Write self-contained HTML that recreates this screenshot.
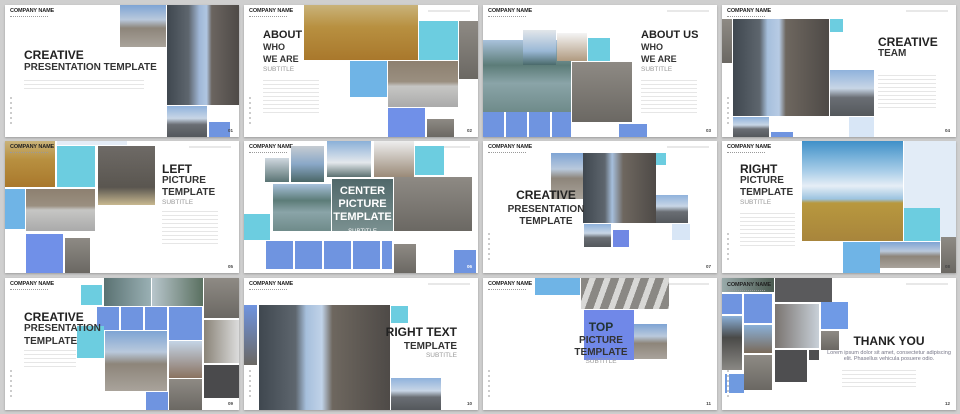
<!DOCTYPE html>
<html><head><meta charset="utf-8"><style>
*{margin:0;padding:0;box-sizing:border-box}
body{width:960px;height:414px;background:#cfcfcf;position:relative;overflow:hidden;font-family:"Liberation Sans",sans-serif}
.s{position:absolute;width:234px;height:132px;background:#fff;overflow:hidden;box-shadow:0 1px 2px rgba(0,0,0,.25)}
.s div{position:absolute}
.cn{left:5px;top:3px;font-size:5.5px;font-weight:bold;color:#222;letter-spacing:-.1px}
.cn:after{content:"";position:absolute;left:0;top:8px;width:38px;height:1px;border-top:1px dotted #999}
.hr{right:8px;top:5px;width:42px;height:2px;background:#e8e8e8}
.pn{right:6px;bottom:4px;font-size:4.5px;color:#444;font-weight:bold}
.vt{left:5px;bottom:10px;width:2px;height:30px;background:repeating-linear-gradient(#ccc 0 2px,#fff 2px 5px)}
.t1{font-size:12px;font-weight:bold;color:#222;white-space:nowrap}
.t2{font-size:10px;font-weight:bold;color:#333;white-space:nowrap}
.st{font-size:6.5px;color:#999;white-space:nowrap}
.lo{height:35px;background:repeating-linear-gradient(#e6e6e6 0 1px,#fff 1px 4px)}
.bld{background:linear-gradient(90deg,#3f474f 0,#5e666e 30%,#9fb7d6 45%,#b0c6e2 55%,#6b6560 62%,#4e4a47 100%)}
.bld2{background:linear-gradient(180deg,#8fb2dc,#c8d6e6 40%,#6a6e74 60%,#54585c)}
.str{background:linear-gradient(180deg,#7ea4d4 0,#b9c9dc 35%,#8d857a 55%,#a9a39b 100%)}
.fld{background:linear-gradient(180deg,#c9b37a 0,#b89040 40%,#a9782c 100%)}
.lak{background:linear-gradient(180deg,#a9c2dc 0,#5c7c78 35%,#8aa4a8 60%,#6f8b8a 100%)}
.gry{background:linear-gradient(180deg,#8e8a84,#6b6863)}
.sky{background:linear-gradient(180deg,#3f90c8 0,#a8cde8 30%,#e6eef6 45%,#9cc3e0 58%,#b8983e 62%,#a8853c 100%)}
.blu{background:#6f94e0}
.cy{background:#6ccde0}
.lb{background:#6fb4e6}
</style></head><body>

<!-- S1 -->
<div class="s" style="left:5px;top:5px">
<div class="cn">COMPANY NAME</div>
<div class="t1" style="left:19px;top:43px">CREATIVE</div>
<div class="t2" style="left:19px;top:57px">PRESENTATION TEMPLATE</div>
<div class="lo" style="left:19px;top:75px;width:120px;height:12px"></div>
<div class="str" style="left:115px;top:0;width:46px;height:42px"></div>
<div class="bld" style="left:162px;top:0;width:72px;height:100px"></div>
<div class="bld2" style="left:162px;top:101px;width:40px;height:31px"></div>
<div class="blu" style="left:204px;top:117px;width:21px;height:15px"></div>
<div class="vt"></div><div class="pn">01</div>
</div>

<!-- S2 -->
<div class="s" style="left:244px;top:5px">
<div class="cn">COMPANY NAME</div><div class="hr"></div>
<div class="t1" style="left:19px;top:24px;font-size:11px">ABOUT</div>
<div class="t2" style="left:19px;top:37px;font-size:9px">WHO</div>
<div class="t2" style="left:19px;top:49px;font-size:9px">WE ARE</div>
<div class="st" style="left:19px;top:61px">SUBTITLE</div>
<div class="lo" style="left:19px;top:75px;width:56px"></div>
<div class="fld" style="left:60px;top:0;width:114px;height:55px"></div>
<div class="cy" style="left:175px;top:16px;width:39px;height:39px"></div>
<div class="gry" style="left:215px;top:16px;width:19px;height:58px"></div>
<div class="lb" style="left:106px;top:56px;width:37px;height:36px"></div>
<div style="left:144px;top:56px;width:70px;height:46px;background:linear-gradient(180deg,#8d8070 0,#9a8f80 45%,#c6c6c4 55%,#aaa 100%)"></div>
<div style="left:144px;top:103px;width:37px;height:29px;background:#7090e8"></div>
<div class="gry" style="left:183px;top:114px;width:27px;height:18px"></div>
<div class="vt"></div><div class="pn">02</div>
</div>

<!-- S3 -->
<div class="s" style="left:483px;top:5px">
<div class="cn">COMPANY NAME</div><div class="hr"></div>
<div class="t1" style="left:158px;top:24px;font-size:11px">ABOUT US</div>
<div class="t2" style="left:158px;top:37px;font-size:9px">WHO</div>
<div class="t2" style="left:158px;top:49px;font-size:9px">WE ARE</div>
<div class="st" style="left:158px;top:61px">SUBTITLE</div>
<div class="lo" style="left:158px;top:75px;width:56px"></div>
<div class="lak" style="left:0;top:35px;width:88px;height:72px"></div>
<div style="left:40px;top:25px;width:33px;height:35px;background:linear-gradient(180deg,#e2e6ea,#9ab8d6 60%,#4a6a6a)"></div>
<div style="left:74px;top:28px;width:30px;height:28px;background:linear-gradient(180deg,#f4f4f4,#b09a80)"></div>
<div class="cy" style="left:105px;top:33px;width:22px;height:23px"></div>
<div class="gry" style="left:89px;top:57px;width:60px;height:60px"></div>
<div style="left:0;top:107px;width:88px;height:25px;background:repeating-linear-gradient(90deg,#6f94e0 0 21px,#fff 21px 23px)"></div>
<div class="blu" style="left:136px;top:119px;width:28px;height:13px"></div>
<div class="pn">03</div>
</div>

<!-- S4 -->
<div class="s" style="left:722px;top:5px">
<div class="cn">COMPANY NAME</div><div class="hr"></div>
<div class="t1" style="left:156px;top:30px">CREATIVE</div>
<div class="t2" style="left:156px;top:43px">TEAM</div>
<div class="lo" style="left:156px;top:70px;width:58px"></div>
<div style="left:11px;top:14px;width:96px;height:97px;background:linear-gradient(90deg,#3f474f 0,#5e666e 28%,#a6bfdc 36%,#b7cbe4 48%,#6e675f 55%,#4e4a47 100%)"></div>
<div class="gry" style="left:0;top:14px;width:10px;height:44px"></div>
<div class="cy" style="left:108px;top:14px;width:13px;height:13px"></div>
<div class="bld2" style="left:108px;top:65px;width:44px;height:46px"></div>
<div class="bld2" style="left:11px;top:112px;width:36px;height:20px"></div>
<div class="blu" style="left:49px;top:127px;width:22px;height:5px"></div>
<div style="left:127px;top:112px;width:25px;height:20px;background:#d8e6f6"></div>
<div class="vt"></div><div class="pn">04</div>
</div>

<!-- S5 -->
<div class="s" style="left:5px;top:141px">
<div class="fld" style="left:0;top:0;width:50px;height:46px"></div>
<div class="cn">COMPANY NAME</div><div class="hr"></div>
<div style="left:52px;top:0;width:70px;height:4px;background:#e4ecf6"></div>
<div class="cy" style="left:52px;top:5px;width:38px;height:41px"></div>
<div style="left:93px;top:5px;width:57px;height:59px;background:linear-gradient(180deg,#6e6a66,#5a5650 70%,#c8b890)"></div>
<div class="lb" style="left:0;top:48px;width:20px;height:40px"></div>
<div style="left:21px;top:48px;width:69px;height:42px;background:linear-gradient(180deg,#8d8070 0,#9a8f80 40%,#c6c6c4 50%,#aaa 100%)"></div>
<div style="left:21px;top:93px;width:37px;height:39px;background:#7090e8"></div>
<div class="gry" style="left:60px;top:97px;width:25px;height:35px"></div>
<div class="t1" style="left:157px;top:21px">LEFT</div>
<div class="t2" style="left:157px;top:34px">PICTURE</div>
<div class="t2" style="left:157px;top:46px">TEMPLATE</div>
<div class="st" style="left:157px;top:58px">SUBTITLE</div>
<div class="lo" style="left:157px;top:70px;width:56px"></div>
<div class="pn">05</div>
</div>

<!-- S6 -->
<div class="s" style="left:244px;top:141px">
<div class="cn">COMPANY NAME</div><div class="hr"></div>
<div style="left:21px;top:17px;width:24px;height:24px;background:linear-gradient(180deg,#d0d8e0,#5a7474)"></div>
<div style="left:47px;top:5px;width:33px;height:36px;background:linear-gradient(180deg,#c6ccd2,#8aa8c8 50%,#4a6666)"></div>
<div style="left:83px;top:0;width:44px;height:36px;background:linear-gradient(180deg,#8ab0d8,#e4e8ec 60%,#5a7070)"></div>
<div style="left:130px;top:0;width:40px;height:36px;background:linear-gradient(180deg,#eee,#9a8a78)"></div>
<div class="cy" style="left:171px;top:5px;width:29px;height:29px"></div>
<div class="lak" style="left:29px;top:43px;width:58px;height:47px"></div>
<div style="left:88px;top:38px;width:61px;height:52px;background:linear-gradient(180deg,#50686a,#7a9090)"></div>
<div class="gry" style="left:150px;top:36px;width:78px;height:54px"></div>
<div class="cy" style="left:0;top:73px;width:26px;height:26px"></div>
<div style="left:22px;top:100px;width:126px;height:28px;background:repeating-linear-gradient(90deg,#6f94e0 0 27px,#fff 27px 29px)"></div>
<div class="gry" style="left:150px;top:103px;width:22px;height:29px"></div>
<div class="blu" style="left:210px;top:109px;width:22px;height:23px"></div>
<div style="left:88px;top:44px;width:61px;text-align:center;color:#fff;font-weight:bold;font-size:11px;line-height:13px">CENTER<br>PICTURE<br>TEMPLATE<br><span style="font-size:6px;font-weight:normal">SUBTITLE</span></div>
<div class="pn" style="color:#fff">06</div>
</div>

<!-- S7 -->
<div class="s" style="left:483px;top:141px">
<div class="cn">COMPANY NAME</div><div class="hr"></div>
<div class="str" style="left:68px;top:12px;width:32px;height:46px"></div>
<div style="left:100px;top:12px;width:73px;height:70px;background:linear-gradient(90deg,#3f474f 0,#5e666e 30%,#a6bfdc 40%,#6e675f 55%,#4e4a47 100%)"></div>
<div class="cy" style="left:173px;top:12px;width:10px;height:12px"></div>
<div class="bld2" style="left:173px;top:54px;width:32px;height:28px"></div>
<div class="bld2" style="left:101px;top:83px;width:27px;height:23px"></div>
<div style="left:130px;top:89px;width:16px;height:17px;background:#7088e4"></div>
<div style="left:189px;top:83px;width:18px;height:16px;background:#d8e6f6"></div>
<div style="left:0;top:47px;width:126px;text-align:center">
<div class="t1" style="position:static">CREATIVE</div>
<div class="t2" style="position:static;margin-top:2px">PRESENTATION</div>
<div class="t2" style="position:static;margin-top:1px">TEMPLATE</div></div>
<div class="vt"></div><div class="pn">07</div>
</div>

<!-- S8 -->
<div class="s" style="left:722px;top:141px">
<div class="cn">COMPANY NAME</div>
<div style="left:182px;top:0;width:52px;height:100px;background:#e2ecf7"></div>
<div class="sky" style="left:80px;top:0;width:101px;height:100px"></div>
<div class="cy" style="left:182px;top:67px;width:36px;height:33px"></div>
<div class="lb" style="left:121px;top:101px;width:37px;height:31px"></div>
<div class="str" style="left:158px;top:101px;width:60px;height:26px"></div>
<div class="gry" style="left:219px;top:96px;width:15px;height:36px"></div>
<div class="t1" style="left:18px;top:21px">RIGHT</div>
<div class="t2" style="left:18px;top:34px">PICTURE</div>
<div class="t2" style="left:18px;top:46px">TEMPLATE</div>
<div class="st" style="left:18px;top:58px">SUBTITLE</div>
<div class="lo" style="left:18px;top:72px;width:55px"></div>
<div class="vt"></div><div class="pn">08</div>
</div>

<!-- S9 -->
<div class="s" style="left:5px;top:278px">
<div class="cn">COMPANY NAME</div>
<div class="cy" style="left:76px;top:7px;width:21px;height:20px"></div>
<div style="left:99px;top:0;width:47px;height:28px;background:linear-gradient(90deg,#5a7272,#9ab0b4)"></div>
<div style="left:147px;top:0;width:51px;height:28px;background:linear-gradient(90deg,#b8c6cc,#5a7060)"></div>
<div class="gry" style="left:199px;top:0;width:35px;height:40px"></div>
<div style="left:92px;top:29px;width:70px;height:23px;background:repeating-linear-gradient(90deg,#6f94e0 0 22px,#fff 22px 24px)"></div>
<div class="blu" style="left:164px;top:29px;width:33px;height:33px"></div>
<div class="cy" style="left:72px;top:48px;width:27px;height:32px"></div>
<div class="str" style="left:100px;top:53px;width:62px;height:60px"></div>
<div style="left:164px;top:63px;width:33px;height:37px;background:linear-gradient(180deg,#c4d4e6,#8a7260)"></div>
<div style="left:199px;top:42px;width:35px;height:43px;background:linear-gradient(90deg,#8a8478,#dcdcdc)"></div>
<div class="gry" style="left:164px;top:101px;width:33px;height:31px"></div>
<div style="left:199px;top:87px;width:35px;height:33px;background:#4a4a4c"></div>
<div class="blu" style="left:141px;top:114px;width:22px;height:18px"></div>
<div class="t1" style="left:19px;top:32px">CREATIVE</div>
<div class="t2" style="left:19px;top:45px">PRESENTATION</div>
<div class="t2" style="left:19px;top:58px">TEMPLATE</div>
<div class="lo" style="left:19px;top:72px;width:52px;height:18px"></div>
<div class="vt"></div><div class="pn">09</div>
</div>

<!-- S10 -->
<div class="s" style="left:244px;top:278px">
<div class="cn">COMPANY NAME</div><div class="hr"></div>
<div style="left:0;top:27px;width:13px;height:60px;background:linear-gradient(180deg,#6f94e0,#6b6863)"></div>
<div style="left:15px;top:27px;width:131px;height:105px;background:linear-gradient(90deg,#3f474f 0,#5e666e 28%,#a6bfdc 36%,#c0d2e8 48%,#6e675f 56%,#4e4a47 100%)"></div>
<div class="cy" style="left:147px;top:28px;width:17px;height:17px"></div>
<div class="bld2" style="left:147px;top:100px;width:50px;height:32px"></div>
<div style="right:21px;top:47px;text-align:right">
<div class="t1" style="position:static">RIGHT TEXT</div>
<div class="t2" style="position:static;margin-top:2px">TEMPLATE</div>
<div class="st" style="position:static">SUBTITLE</div></div>
<div class="vt"></div><div class="pn">10</div>
</div>

<!-- S11 -->
<div class="s" style="left:483px;top:278px">
<div class="cn">COMPANY NAME</div><div class="hr"></div>
<div class="lb" style="left:52px;top:0;width:45px;height:17px"></div>
<div style="left:98px;top:0;width:88px;height:31px;background:repeating-linear-gradient(110deg,#8a8884 0 8px,#d8d8d6 8px 14px)"></div>
<div style="left:101px;top:32px;width:50px;height:50px;background:#7088e8"></div>
<div class="str" style="left:151px;top:46px;width:33px;height:35px"></div>
<div style="left:82px;top:42px;width:72px;text-align:center">
<div class="t1" style="position:static;color:#233">TOP</div>
<div class="t2" style="position:static;margin-top:1px">PICTURE</div>
<div class="t2" style="position:static;margin-top:1px">TEMPLATE</div>
<div class="st" style="position:static">SUBTITLE</div></div>
<div class="vt"></div><div class="pn">11</div>
</div>

<!-- S12 -->
<div class="s" style="left:722px;top:278px">
<div style="left:0;top:0;width:52px;height:14px;background:linear-gradient(90deg,#9aa,#4a5a50)"></div>
<div style="left:53px;top:0;width:57px;height:24px;background:#5a5a5c"></div>
<div class="cn" style="top:4px">COMPANY NAME</div><div class="hr"></div>
<div class="blu" style="left:0;top:16px;width:20px;height:20px"></div>
<div class="blu" style="left:22px;top:16px;width:28px;height:29px"></div>
<div style="left:0;top:38px;width:20px;height:54px;background:linear-gradient(180deg,#8ab0d8,#4a4a48 40%,#8a8884)"></div>
<div style="left:22px;top:47px;width:28px;height:28px;background:linear-gradient(180deg,#8ab0d8,#7a6a5a)"></div>
<div class="gry" style="left:22px;top:77px;width:28px;height:35px"></div>
<div style="left:53px;top:26px;width:44px;height:44px;background:linear-gradient(90deg,#7a7470,#c8d0d8)"></div>
<div style="left:53px;top:72px;width:32px;height:32px;background:#4e4e50"></div>
<div style="left:87px;top:72px;width:10px;height:10px;background:#4e4e50"></div>
<div class="blu" style="left:99px;top:24px;width:27px;height:27px;background:#6f9ae6"></div>
<div class="gry" style="left:99px;top:53px;width:18px;height:19px"></div>
<div class="blu" style="left:3px;top:96px;width:19px;height:19px;background:#6f9ae0"></div>
<div style="left:100px;top:56px;width:134px;text-align:center">
<div class="t1" style="position:static">THANK YOU</div>
<div style="position:static;font-size:5.5px;color:#778;line-height:6px;margin-top:2px">Lorem ipsum dolor sit amet, consectetur adipiscing<br>elit. Phasellus vehicula posuere odio.</div>
</div>
<div class="lo" style="left:120px;top:92px;width:74px;height:18px"></div>
<div class="vt"></div><div class="pn">12</div>
</div>

</body></html>
